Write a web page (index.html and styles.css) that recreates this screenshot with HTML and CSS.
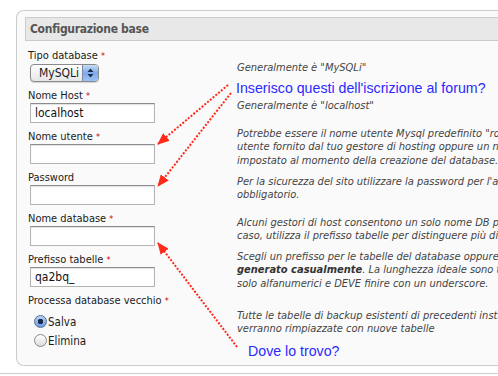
FILE: index.html
```html
<!DOCTYPE html>
<html lang="it">
<head>
    <meta charset="UTF-8">
    <title>Configurazione base</title>
    <link rel="stylesheet" href="styles.css">
</head>
<body>
    <div class="page">
        <div class="config">
            <div class="config-title">Configurazione base</div>
            <div class="rows">
                <div class="row">
                    <div class="field">
                        <label>Tipo database <span class="req">*</span></label>
                        <div class="select">
                            <span class="select-text">MySQLi</span>
                            <span class="select-btn">
                                <svg width="7" height="10" viewBox="0 0 7 10"><path d="M3.5 0.5 L6.5 4 L0.5 4 Z M3.5 9.5 L6.5 6 L0.5 6 Z" fill="#1c2c4c"/></svg>
                            </span>
                        </div>
                    </div>
                    <div class="help help-low"><div>Generalmente è "MySQLi"</div></div>
                </div>
                <div class="row">
                    <div class="field">
                        <label>Nome Host <span class="req">*</span></label>
                        <input type="text" value="localhost">
                    </div>
                    <div class="help"><div>Generalmente è "localhost"</div></div>
                </div>
                <div class="row">
                    <div class="field">
                        <label>Nome utente <span class="req">*</span></label>
                        <input type="text">
                    </div>
                    <div class="help"><div>Potrebbe essere il nome utente Mysql predefinito "root", un nome<br>utente fornito dal tuo gestore di hosting oppure un nome da te<br>impostato al momento della creazione del database.</div></div>
                </div>
                <div class="row">
                    <div class="field">
                        <label>Password</label>
                        <input type="password">
                    </div>
                    <div class="help"><div>Per la sicurezza del sito utilizzare la password per l'account mysql è<br>obbligatorio.</div></div>
                </div>
                <div class="row">
                    <div class="field">
                        <label>Nome database <span class="req">*</span></label>
                        <input type="text">
                    </div>
                    <div class="help"><div>Alcuni gestori di host consentono un solo nome DB per sito. In questo<br>caso, utilizza il prefisso tabelle per distinguere più di un sito Joomla!.</div></div>
                </div>
                <div class="row">
                    <div class="field">
                        <label>Prefisso tabelle <span class="req">*</span></label>
                        <input type="text" value="qa2bq_">
                    </div>
                    <div class="help"><div>Scegli un prefisso per le tabelle del database oppure usa quello<br><b>generato casualmente</b>. La lunghezza ideale sono tre o quattro caratteri,<br>solo alfanumerici e DEVE finire con un underscore.</div></div>
                </div>
                <div class="row">
                    <div class="field">
                        <label>Processa database vecchio <span class="req">*</span></label>
                        <div class="radios">
                            <div class="radio"><span class="radio-dot checked"></span>Salva</div>
                            <div class="radio"><span class="radio-dot"></span>Elimina</div>
                        </div>
                    </div>
                    <div class="help"><div>Tutte le tabelle di backup esistenti di precedenti installazioni di Joomla<br>verranno rimpiazzate con nuove tabelle</div></div>
                </div>
            </div>
        </div>
        <div class="rule"></div>

        <!-- annotations drawn over the form -->
        <svg class="marks" width="498" height="376" viewBox="0 0 498 376">
            <defs>
                <marker id="head" markerWidth="12" markerHeight="10" refX="11" refY="5" orient="auto" markerUnits="userSpaceOnUse">
                    <path d="M0 0 L12 5 L0 10 Z" fill="#ff2a1a"/>
                </marker>
            </defs>
            <line x1="228" y1="85" x2="158" y2="144" class="dots" marker-end="url(#head)"/>
            <line x1="231" y1="93" x2="158" y2="186" class="dots" marker-end="url(#head)"/>
            <line x1="237" y1="347" x2="158" y2="243" class="dots" marker-end="url(#head)"/>
        </svg>
        <div class="note note-forum">Inserisco questi dell'iscrizione al forum?</div>
        <div class="note note-where">Dove lo trovo?</div>
    </div>
</body>
</html>
```

FILE: styles.css
```css
body {
    margin: 0;
    padding: 0;
    background-color: #ffffff;
    font-family: "DejaVu Sans Condensed", "DejaVu Sans", sans-serif;
    font-size: 11px;
    color: #1a1a1a;
    overflow: hidden;
}
.page {
    position: relative;
    width: 498px;
    height: 376px;
    padding-top: 10px;
    box-sizing: border-box;
}
.config {
    margin-left: 16px;
    height: 356px;
    box-sizing: border-box;
    border: 1px solid #cccccc;
    border-right: none;
    border-radius: 8px 0 0 8px;
    background-color: #fafafa;
    padding-top: 6px;
}
.config-title {
    margin-left: 8px;
    height: 24px;
    box-sizing: border-box;
    border: 1px solid #cccccc;
    border-right: none;
    background-color: #e8e8e8;
    padding-left: 4px;
    line-height: 22px;
    font-weight: bold;
    font-size: 12px;
    letter-spacing: -0.3px;
    color: #555555;
}
.rows {
    display: flex;
    flex-direction: column;
    gap: 7px;
    padding: 8px 0 0 11px;
}
.row {
    display: grid;
    grid-template-columns: 209px 340px;
    align-items: center;
}
.field label {
    display: block;
    line-height: 14px;
}
.req {
    color: #cc0000;
    font-size: 9px;
    vertical-align: top;
}
.field input {
    display: block;
    width: 125px;
    height: 20px;
    box-sizing: border-box;
    margin: 0 0 0 2px;
    border: 1px solid #b4b4b4;
    border-top-color: #8c8c8c;
    box-shadow: inset 0 1px 1px rgba(0, 0, 0, 0.12);
    background-color: #ffffff;
    padding: 0 4px;
    font-family: "DejaVu Sans Condensed", "DejaVu Sans", sans-serif;
    font-size: 12px;
    color: #111111;
}
.select {
    display: flex;
    width: 69px;
    height: 18px;
    margin: 1px 0 0 2px;
    box-sizing: border-box;
    border: 1px solid #8a8a8a;
    border-radius: 4px;
    overflow: hidden;
    background: linear-gradient(#ffffff, #e6e6e6);
    box-shadow: 0 1px 1px rgba(0, 0, 0, 0.15);
}
.select-text {
    flex: 1;
    padding-left: 8px;
    line-height: 16px;
    font-size: 12px;
}
.select-btn {
    width: 15px;
    display: flex;
    align-items: center;
    justify-content: center;
    border-left: 1px solid #7c8ca8;
    background: linear-gradient(#c8dcf6, #7eaaea 50%, #9cc2f4);
}
.radios {
    padding: 4px 0 0 6px;
}
.radio {
    display: flex;
    align-items: center;
    height: 19px;
    font-size: 11.5px;
}
.radio-dot {
    width: 13px;
    height: 13px;
    box-sizing: border-box;
    border: 1px solid #8a8a8a;
    border-radius: 50%;
    background: linear-gradient(#ffffff, #dcdcdc);
    margin-right: 1px;
}
.radio-dot.checked {
    border-color: #5a6e96;
    background: radial-gradient(circle, #1c2c48 0, #1c2c48 2.5px, transparent 3px), linear-gradient(#b8d2f4, #6a9ae4);
}
/* help text is centred on the field but must not stretch the row */
.help {
    height: 0;
    display: flex;
    flex-direction: column;
    justify-content: center;
    font-size: 11px;
    font-style: italic;
    line-height: 13.5px;
    color: #444444;
    white-space: nowrap;
}
.help-low {
    padding-top: 5px;
}
.help b {
    color: #333333;
}
.rule {
    margin-top: 7px;
    height: 1px;
    background-color: #cccccc;
}
.marks {
    position: absolute;
    top: 0;
    left: 0;
}
.dots {
    stroke: #ff2a1a;
    stroke-width: 2;
    stroke-dasharray: 2 1.6;
}
.note {
    position: absolute;
    font-family: "Liberation Sans", Arial, sans-serif;
    font-size: 14.2px;
    color: #2a2aff;
    white-space: nowrap;
}
.note-forum {
    left: 236px;
    top: 80px;
}
.note-where {
    left: 248px;
    top: 343px;
}
```
